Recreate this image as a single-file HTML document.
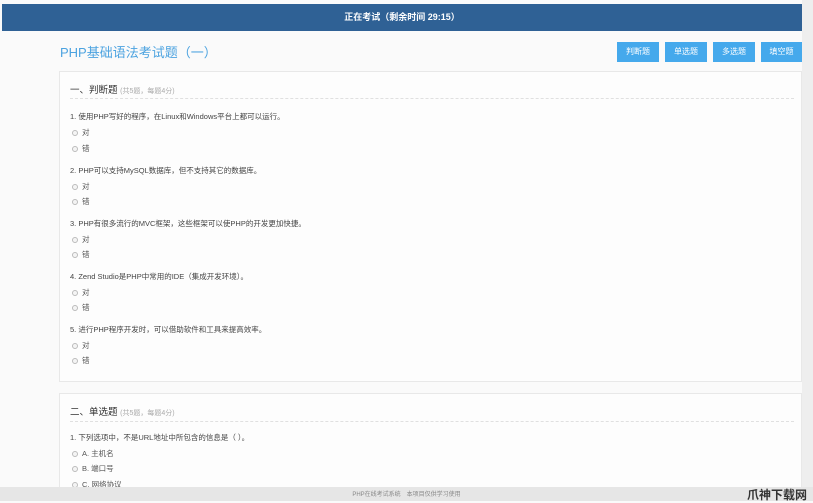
<!DOCTYPE html>
<html><head><meta charset="utf-8"><style>
*{margin:0;padding:0;box-sizing:border-box}
body{width:813px;height:501px;overflow:hidden;background:#fafafa;position:relative;font-family:"Liberation Sans","Noto Sans CJK SC",sans-serif;color:#333}
.a{position:absolute;white-space:nowrap}
.hdr{left:2px;top:4px;width:800px;height:27px;background:#2f6195;color:#fff;font-size:9px;font-weight:bold;text-align:center;line-height:27px}
.rs{left:802px;top:0;width:11px;height:501px;background:#eeeeee}
.title{left:60px;top:42px;font-size:13px;color:#4ca3e0}
.btn{top:42px;height:20px;width:42px;background:#45a9ec;color:#fff;font-size:8px;text-align:center;line-height:20px}
.card{left:59px;width:743px;background:#fdfdfd;border:1px solid #e8e8e8}
.sec{font-size:9.5px;color:#333}
.sec span{font-size:7px;color:#aaa}
.dash{left:70px;width:724px;border-top:1px dashed #e0e0e0}
.q{left:70px;font-size:7.5px;color:#444}
.o{left:72px;font-size:7.5px;color:#555}
.o i{display:inline-block;width:6px;height:6px;border:1px solid #bbb;border-radius:50%;margin-right:4px;vertical-align:-1px;background:#f4f4f4}
.ft{left:0;top:487px;width:813px;height:14px;background:#e6e6e6;font-size:6px;color:#888;text-align:center;line-height:16px}
</style></head><body>
<div class="a rs"></div>
<div class="a hdr">正在考试（剩余时间 29:15）</div>
<div class="a title">PHP基础语法考试题（一）</div>
<div class="a btn" style="left:617px">判断题</div>
<div class="a btn" style="left:665px">单选题</div>
<div class="a btn" style="left:713px">多选题</div>
<div class="a btn" style="left:761px;width:41px">填空题</div>

<div class="a card" style="top:71px;height:311px"></div>
<div class="a sec" style="left:70px;top:82px">一、判断题 <span>(共5题，每题4分)</span></div>
<div class="a dash" style="top:98px"></div>
<div class="a q" style="top:111px">1. 使用PHP写好的程序，在Linux和Windows平台上都可以运行。</div>
<div class="a o" style="top:127px"><i></i>对</div>
<div class="a o" style="top:143px"><i></i>错</div>
<div class="a q" style="top:165px">2. PHP可以支持MySQL数据库，但不支持其它的数据库。</div>
<div class="a o" style="top:181px"><i></i>对</div>
<div class="a o" style="top:196px"><i></i>错</div>
<div class="a q" style="top:218px">3. PHP有很多流行的MVC框架，这些框架可以使PHP的开发更加快捷。</div>
<div class="a o" style="top:234px"><i></i>对</div>
<div class="a o" style="top:249px"><i></i>错</div>
<div class="a q" style="top:271px">4. Zend Studio是PHP中常用的IDE（集成开发环境）。</div>
<div class="a o" style="top:287px"><i></i>对</div>
<div class="a o" style="top:302px"><i></i>错</div>
<div class="a q" style="top:324px">5. 进行PHP程序开发时，可以借助软件和工具来提高效率。</div>
<div class="a o" style="top:340px"><i></i>对</div>
<div class="a o" style="top:355px"><i></i>错</div>

<div class="a card" style="top:393px;height:100px"></div>
<div class="a sec" style="left:70px;top:404px">二、单选题 <span>(共5题，每题4分)</span></div>
<div class="a dash" style="top:421px"></div>
<div class="a q" style="top:432px">1. 下列选项中，不是URL地址中所包含的信息是（ ）。</div>
<div class="a o" style="top:448px"><i></i>A. 主机名</div>
<div class="a o" style="top:463px"><i></i>B. 端口号</div>
<div class="a o" style="top:479px"><i></i>C. 网络协议</div>

<div class="a ft">PHP在线考试系统　本项目仅供学习使用</div>
<div class="a" style="left:747px;top:486px;font-size:12px;font-weight:bold;color:#333">爪神下载网</div>
</body></html>
